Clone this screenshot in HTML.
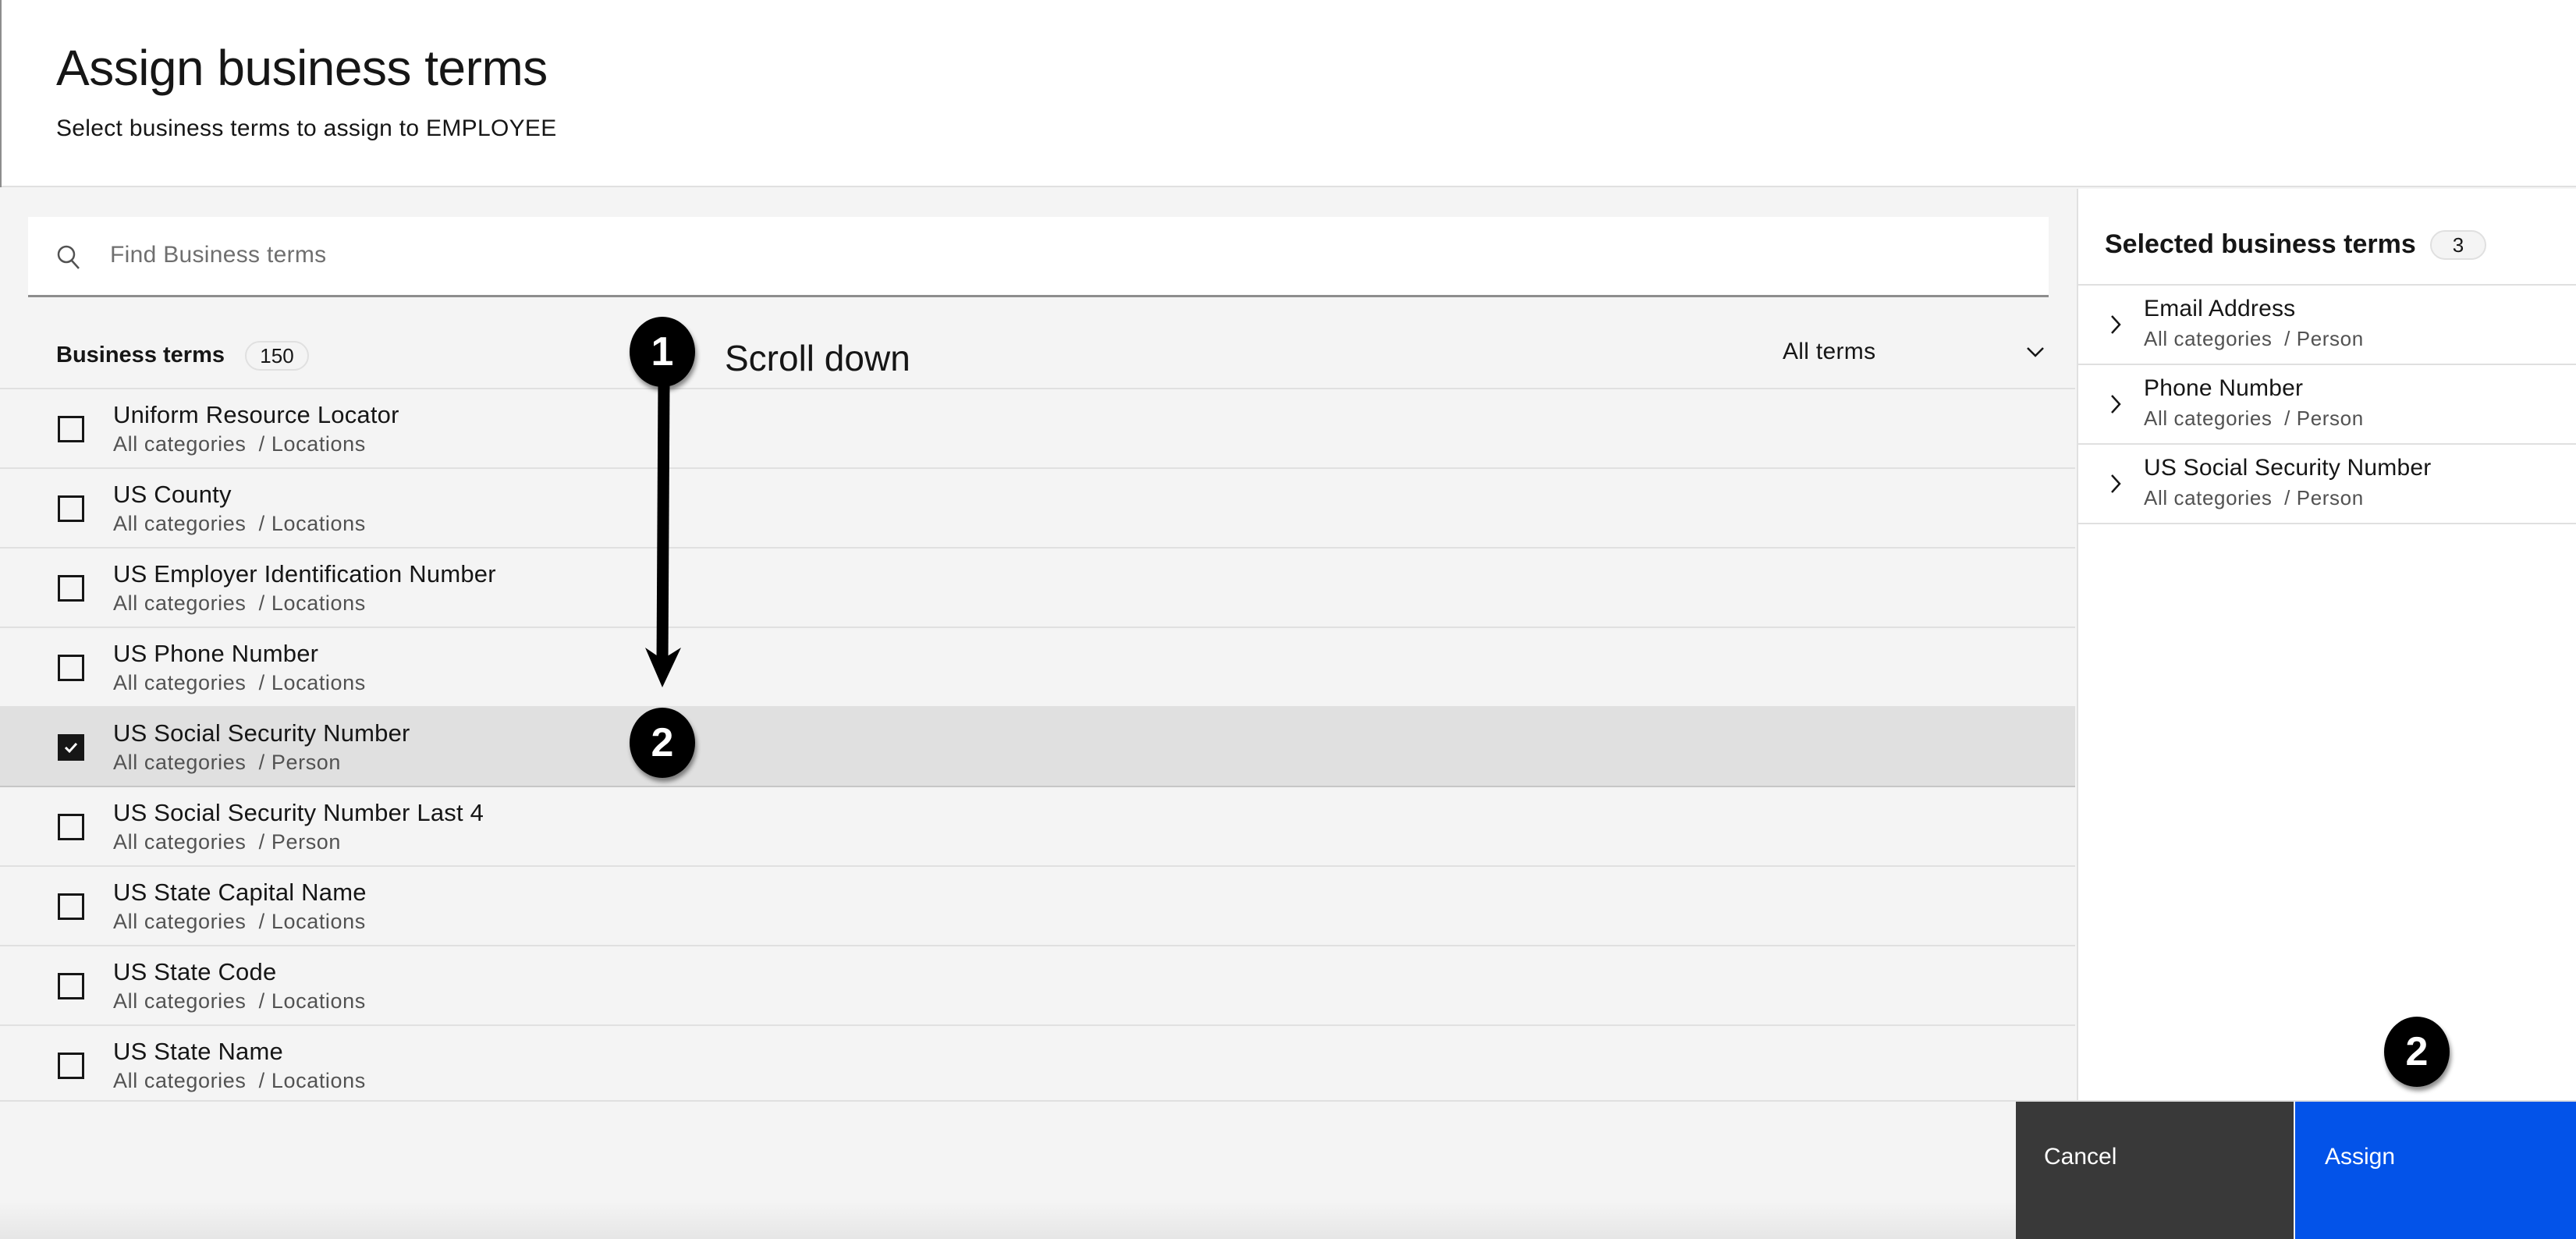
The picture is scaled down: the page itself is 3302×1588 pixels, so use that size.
<!DOCTYPE html>
<html><head><meta charset="utf-8"><style>
*{margin:0;padding:0;box-sizing:border-box}
body{width:3302px;height:1588px;overflow:hidden;background:#f4f4f4;font-family:"Liberation Sans",sans-serif;position:relative;color:#161616}
.abs{position:absolute}
.header{left:0;top:0;width:3302px;height:240px;background:#fff;border-bottom:2px solid #e0e0e0}
.title{left:72px;top:50px;font-size:64px;letter-spacing:-0.5px}
.sub{left:72px;top:148px;font-size:30px;letter-spacing:0.3px}
.search{left:36px;top:278px;width:2590px;height:103px;background:#fff;border-bottom:3px solid #8d8d8d}
.ph{left:141px;top:310px;font-size:30px;color:#6f6f6f;letter-spacing:0.3px}
.bt{left:72px;top:439px;font-size:29px;font-weight:bold}
.badge{border:2px solid #e0e0e0;background:#f4f4f4;border-radius:20px;text-align:center;font-size:26px;line-height:34px;height:38px}
.row{left:0;width:2660px;height:102px;border-bottom:2px solid #e0e0e0}
.row .cb{position:absolute;left:74px;top:34px;width:34px;height:34px;border:3px solid #161616;background:transparent}
.row .t{position:absolute;left:145px;top:15px;font-size:31px;letter-spacing:0.2px}
.row .s{position:absolute;left:145px;top:55px;font-size:27px;color:#525252;letter-spacing:0.6px}
.right{left:2662px;top:242px;width:640px;height:1170px;background:#fff;border-left:2px solid #e0e0e0}
.rrow{left:2662px;width:640px;height:102px;border-bottom:2px solid #e0e0e0}
.rrow .t{position:absolute;left:86px;top:13px;font-size:30px;letter-spacing:0.2px}
.rrow .s{position:absolute;left:86px;top:53px;font-size:26px;color:#525252;letter-spacing:0.6px}
.circ{width:84px;height:90px;border-radius:50%;background:#000;color:#fff;font-size:52px;font-weight:bold;text-align:center;line-height:90px;box-shadow:2px 5px 6px rgba(0,0,0,.45)}
</style></head><body>
<div class="abs header"></div>
<div class="abs" style="left:0;top:0;width:2px;height:240px;background:#8d8d8d"></div>
<div class="abs title">Assign business terms</div>
<div class="abs sub">Select business terms to assign to EMPLOYEE</div>
<div class="abs search"></div>
<svg class="abs" style="left:72px;top:312px" width="32" height="36" viewBox="0 0 32 36"><circle cx="13" cy="14" r="10" fill="none" stroke="#525252" stroke-width="2.5"/><line x1="20" y1="22" x2="29" y2="32" stroke="#525252" stroke-width="2.5"/></svg>
<div class="abs ph">Find Business terms</div>
<div class="abs bt">Business terms</div>
<div class="abs badge" style="left:314px;top:437px;width:82px;font-size:26px">150</div>
<div class="abs" style="left:2285px;top:434px;font-size:30px;letter-spacing:0.3px">All terms</div>
<svg class="abs" style="left:2597px;top:443px" width="24" height="16" viewBox="0 0 24 16"><path d="M2 3 L12 13 L22 3" fill="none" stroke="#161616" stroke-width="2.5"/></svg>
<div class="abs" style="left:0;top:497px;width:2660px;height:2px;background:#e0e0e0"></div>

<div class="abs row" style="top:499px"><div class="cb"></div><div class="t">Uniform Resource Locator</div><div class="s">All categories &nbsp;/ Locations</div></div>
<div class="abs row" style="top:601px"><div class="cb"></div><div class="t">US County</div><div class="s">All categories &nbsp;/ Locations</div></div>
<div class="abs row" style="top:703px"><div class="cb"></div><div class="t">US Employer Identification Number</div><div class="s">All categories &nbsp;/ Locations</div></div>
<div class="abs row" style="top:805px"><div class="cb"></div><div class="t">US Phone Number</div><div class="s">All categories &nbsp;/ Locations</div></div>
<div class="abs row" style="top:907px;background:#e0e0e0;border-bottom-color:#c6c6c6"><div class="cb" style="background:#161616"><svg width="28" height="28" viewBox="0 0 28 28" style="position:absolute;left:0;top:0"><path d="M7 14 L12 19 L21 9" fill="none" stroke="#fff" stroke-width="3"/></svg></div><div class="t">US Social Security Number</div><div class="s">All categories &nbsp;/ Person</div></div>
<div class="abs row" style="top:1009px"><div class="cb"></div><div class="t">US Social Security Number Last 4</div><div class="s">All categories &nbsp;/ Person</div></div>
<div class="abs row" style="top:1111px"><div class="cb"></div><div class="t">US State Capital Name</div><div class="s">All categories &nbsp;/ Locations</div></div>
<div class="abs row" style="top:1213px"><div class="cb"></div><div class="t">US State Code</div><div class="s">All categories &nbsp;/ Locations</div></div>
<div class="abs row" style="top:1315px;height:97px;border-bottom:none"><div class="cb"></div><div class="t">US State Name</div><div class="s">All categories &nbsp;/ Locations</div></div>

<div class="abs right"></div>
<div class="abs" style="left:2698px;top:294px;font-size:34px;font-weight:bold">Selected business terms</div>
<div class="abs badge" style="left:3115px;top:295px;width:72px">3</div>
<div class="abs" style="left:2662px;top:364px;width:640px;height:2px;background:#e0e0e0"></div>
<div class="abs rrow" style="top:366px"><svg style="position:absolute;left:42px;top:36px" width="16" height="28" viewBox="0 0 16 28"><path d="M3 3 L13 14 L3 25" fill="none" stroke="#161616" stroke-width="2.5"/></svg><div class="t">Email Address</div><div class="s">All categories &nbsp;/ Person</div></div>
<div class="abs rrow" style="top:468px"><svg style="position:absolute;left:42px;top:36px" width="16" height="28" viewBox="0 0 16 28"><path d="M3 3 L13 14 L3 25" fill="none" stroke="#161616" stroke-width="2.5"/></svg><div class="t">Phone Number</div><div class="s">All categories &nbsp;/ Person</div></div>
<div class="abs rrow" style="top:570px"><svg style="position:absolute;left:42px;top:36px" width="16" height="28" viewBox="0 0 16 28"><path d="M3 3 L13 14 L3 25" fill="none" stroke="#161616" stroke-width="2.5"/></svg><div class="t">US Social Security Number</div><div class="s">All categories &nbsp;/ Person</div></div>

<div class="abs" style="left:0;top:1410px;width:3302px;height:2px;background:#e0e0e0"></div>
<div class="abs" style="left:0;top:1540px;width:2584px;height:48px;background:linear-gradient(#f4f4f4,#e6e6e6)"></div>
<div class="abs" style="left:2584px;top:1412px;width:356px;height:176px;background:#393939;color:#fff;font-size:30px;padding:54px 0 0 36px">Cancel</div>
<div class="abs" style="left:2942px;top:1412px;width:360px;height:176px;background:#0353e9;color:#fff;font-size:30px;padding:54px 0 0 38px">Assign</div>

<svg class="abs" style="left:800px;top:480px" width="100" height="420" viewBox="0 0 100 420"><path d="M51 10 L49 370" stroke="#000" stroke-width="15"/><path d="M27 350 L49 401 L73 350 L49 365 Z" fill="#000"/></svg>
<div class="abs circ" style="left:807px;top:406px">1</div>
<div class="abs" style="left:929px;top:432px;font-size:46px">Scroll down</div>
<div class="abs circ" style="left:807px;top:907px">2</div>
<div class="abs circ" style="left:3056px;top:1303px">2</div>
</body></html>
